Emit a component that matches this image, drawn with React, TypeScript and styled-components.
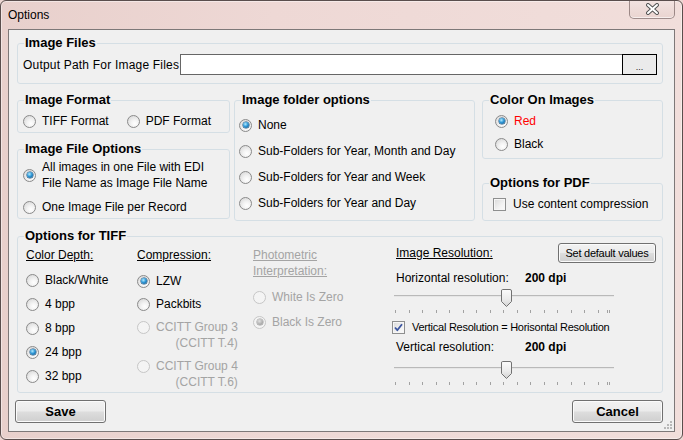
import React from 'react';
import styled, { createGlobalStyle } from 'styled-components';

const GlobalStyle = createGlobalStyle`
 html, body {
  margin: 0;
  padding: 0;
  background: #ecd6d2;
 }
 body {
  font-family: "Liberation Sans", Arial, sans-serif;
  font-size: 12px;
  color: #000;
 }
 * {
  box-sizing: border-box;
 }
`;

interface RadioProps {
 checked?: boolean;
 disabled?: boolean;
 color?: string;
 top?: boolean;
 right?: boolean;
 children: React.ReactNode;
}

function Radio(props: RadioProps) {
 return (
  <Option $disabled={props.disabled} $top={props.top} $color={props.color}>
   <RadioGlyph $checked={props.checked} $disabled={props.disabled} />
   <OptionText $right={props.right}>{props.children}</OptionText>
  </Option>
 );
}

function CheckBox(props: { checked?: boolean; narrow?: boolean; children: React.ReactNode }) {
 return (
  <Option $gap={7}>
   <CheckGlyph>
    {props.checked && (
     <svg width="11" height="11" viewBox="0 0 11 11">
      <path d="M2 5.5 L4.3 8.2 L9 2.2" fill="none" stroke="#3c56a0" strokeWidth="1.8" strokeLinejoin="round" />
     </svg>
    )}
   </CheckGlyph>
   <OptionText $narrow={props.narrow}>{props.children}</OptionText>
  </Option>
 );
}

function Slider(props: { top: number }) {
 const ticks = Array.from({ length: 16 }, (_, i) => 1 + Math.round(i * 13.5)).concat([213, 215]);
 return (
  <SliderBox $top={props.top}>
   <svg width="224" height="27" viewBox="0 0 224 27">
    <defs>
     <linearGradient id="thumbFill" x1="0" y1="0" x2="0" y2="1">
      <stop offset="0" stopColor="#fbfbfb" />
      <stop offset="0.55" stopColor="#ececec" />
      <stop offset="1" stopColor="#d2d2d2" />
     </linearGradient>
    </defs>
    <rect x="0" y="7" width="220" height="1" fill="#b9b9b9" />
    <rect x="0" y="8" width="220" height="1" fill="#e6e6e6" />
    {ticks.map((x) => (
     <rect key={x} x={x} y="22" width="1" height="3" fill="#a2a2a2" />
    ))}
    <path
     d="M108.5 1.5 H116 Q117.5 1.5 117.5 3 V13.5 L112.5 18.5 L107.5 13.5 V3 Q107.5 1.5 108.5 1.5 Z"
     fill="url(#thumbFill)"
     stroke="#727272"
    />
   </svg>
  </SliderBox>
 );
}

function App() {
 return (
  <>
   <GlobalStyle />
   <Window>
    <TitleBar>
     <Title>Options</Title>
     <CloseButton aria-label="Close">
      <svg width="15" height="12" viewBox="0 0 15 12">
       <path d="M3 2 L12 10 M12 2 L3 10" stroke="#545454" strokeWidth="4" strokeLinecap="round" />
       <path d="M3 2 L12 10 M12 2 L3 10" stroke="#ffffff" strokeWidth="2" strokeLinecap="round" />
      </svg>
     </CloseButton>
    </TitleBar>

    <Client>
     <Group>
      <Legend>Image Files</Legend>
      <PathBody>
       <PathLabel>Output Path For Image Files</PathLabel>
       <PathInput readOnly value="" />
       <BrowseButton>...</BrowseButton>
      </PathBody>
     </Group>

     <MiddleRow>
      <Column $gap={8}>
       <Group>
        <Legend>Image Format</Legend>
        <GroupBody $row $gap={18} $pad="5px 5px 3px">
         <Radio>TIFF Format</Radio>
         <Radio>PDF Format</Radio>
        </GroupBody>
       </Group>
       <Group>
        <Legend>Image File Options</Legend>
        <GroupBody $gap={8} $pad="2px 5px 3px">
         <Radio checked>
          All images in one File with EDI
          <br />
          File Name as Image File Name
         </Radio>
         <Radio>One Image File per Record</Radio>
        </GroupBody>
       </Group>
      </Column>

      <Column>
       <Group>
        <Legend>Image folder options</Legend>
        <GroupBody $gap={10} $pad="9px 4px 9px">
         <Radio checked>None</Radio>
         <Radio>Sub-Folders for Year, Month and Day</Radio>
         <Radio>Sub-Folders for Year and Week</Radio>
         <Radio>Sub-Folders for Year and Day</Radio>
        </GroupBody>
       </Group>
      </Column>

      <Column $gap={16} $shift={3}>
       <Group>
        <Legend>Color On Images</Legend>
        <GroupBody $gap={7} $pad="5px 12px 6px">
         <Radio checked color="#ff0000">Red</Radio>
         <Radio>Black</Radio>
        </GroupBody>
       </Group>
       <Group>
        <Legend>Options for PDF</Legend>
        <GroupBody $pad="5px 10px 8px">
         <CheckBox>Use content compression</CheckBox>
        </GroupBody>
       </Group>
      </Column>
     </MiddleRow>

     <TiffGroup>
      <Legend>Options for TIFF</Legend>
      <TiffGrid>
       <TiffColumn $top={3}>
        <Caption>Color Depth:</Caption>
        <OptionList $gap={8} $top={9}>
         <Radio>Black/White</Radio>
         <Radio>4 bpp</Radio>
         <Radio>8 bpp</Radio>
         <Radio checked>24 bpp</Radio>
         <Radio>32 bpp</Radio>
        </OptionList>
       </TiffColumn>

       <TiffColumn $top={3}>
        <Caption>Compression:</Caption>
        <OptionList $gap={7} $top={10}>
         <Radio checked>LZW</Radio>
         <Radio>Packbits</Radio>
         <Radio disabled top right>
          CCITT Group 3
          <br />
          (CCITT T.4)
         </Radio>
         <Radio disabled top right>
          CCITT Group 4
          <br />
          (CCITT T.6)
         </Radio>
        </OptionList>
       </TiffColumn>

       <TiffColumn $top={3}>
        <Caption $disabled>
         Photometric
         <br />
         Interpretation:
        </Caption>
        <OptionList $gap={9} $top={10}>
         <Radio disabled>White Is Zero</Radio>
         <Radio disabled checked>Black Is Zero</Radio>
        </OptionList>
       </TiffColumn>

       <ResolutionColumn>
        <ResolutionHeader>
         <Caption $indent={4}>Image Resolution:</Caption>
         <SmallButton>Set default values</SmallButton>
        </ResolutionHeader>
        <ResolutionRow $top={7}>
         <ResolutionLabel>Horizontal resolution:</ResolutionLabel>
         <ResolutionValue>200 dpi</ResolutionValue>
        </ResolutionRow>
        <Slider top={2} />
        <CheckRow>
         <CheckBox checked narrow>Vertical Resolution = Horisontal Resolution</CheckBox>
        </CheckRow>
        <ResolutionRow $top={5}>
         <ResolutionLabel>Vertical resolution:</ResolutionLabel>
         <ResolutionValue>200 dpi</ResolutionValue>
        </ResolutionRow>
        <Slider top={5} />
       </ResolutionColumn>
      </TiffGrid>
     </TiffGroup>

     <Footer>
      <DialogButton>Save</DialogButton>
      <DialogButton>Cancel</DialogButton>
     </Footer>

     <Grip>
      <svg width="10" height="10" viewBox="0 0 10 10">
       {[
        [7, 1],
        [4, 4],
        [7, 4],
        [1, 7],
        [4, 7],
        [7, 7],
       ].map(([x, y]) => (
        <rect key={`${x}-${y}`} x={x} y={y} width="2" height="2" fill="#b8b8b8" />
       ))}
      </svg>
     </Grip>
    </Client>
   </Window>
  </>
 );
}

export default App;

/* Styled Components */

const Window = styled.div`
 width: 683px;
 height: 440px;
 display: flex;
 flex-direction: column;
 border: 1px solid #5a4e4d;
 border-radius: 6px;
 background: linear-gradient(90deg, #e8d0cc 0%, #eed8d5 40%, #f1dedb 100%);
 box-shadow: inset 0 0 0 1px rgba(255, 255, 255, 0.45);
 overflow: hidden;
`;

const TitleBar = styled.div`
 height: 28px;
 flex: none;
 display: flex;
 align-items: flex-start;
 justify-content: space-between;
 padding: 0 7px 0 7px;
`;

const Title = styled.div`
 padding-top: 6px;
 font-size: 12px;
 line-height: 16px;
 color: #000;
`;

const CloseButton = styled.div`
 width: 46px;
 height: 19px;
 margin-top: -1px;
 display: flex;
 align-items: center;
 justify-content: center;
 border: 1px solid rgba(90, 70, 70, 0.55);
 border-top: none;
 border-radius: 0 0 5px 5px;
 background: linear-gradient(#f3e4e2, #ead4d0);
 box-shadow: inset 0 -1px 0 rgba(255, 255, 255, 0.6);
`;

const Client = styled.div`
 position: relative;
 flex: 1;
 margin: 0 7px 7px 7px;
 border: 1px solid #7d7878;
 background: #f0f0f0;
 display: flex;
 flex-direction: column;
 padding: 5px 11px 8px 8px;
`;

const Group = styled.fieldset`
 margin: 0;
 padding: 0;
 min-width: 0;
 border: 1px solid #d5dfe5;
 border-radius: 3px;
`;

const Legend = styled.legend`
 margin-left: 6px;
 padding: 0 1px;
 font-size: 13px;
 font-weight: bold;
 line-height: 16px;
`;

interface GroupBodyProps {
 $row?: boolean;
 $gap?: number;
 $pad?: string;
}
const GroupBody = styled.div<GroupBodyProps>`
 display: flex;
 flex-direction: ${(p) => (p.$row ? 'row' : 'column')};
 gap: ${(p) => p.$gap ?? 0}px;
 padding: ${(p) => p.$pad ?? '0'};
`;

const PathBody = styled.div`
 display: flex;
 align-items: center;
 padding: 3px 5px 8px 5px;
`;

const PathLabel = styled.div`
 width: 157px;
 flex: none;
 font-size: 12px;
 letter-spacing: 0.2px;
 line-height: 16px;
 white-space: nowrap;
`;

const PathInput = styled.input`
 flex: 1;
 min-width: 0;
 height: 21px;
 margin: 0;
 padding: 0 3px;
 border: 1px solid #666;
 background: #fff;
 font: inherit;
 outline: none;
`;

const BrowseButton = styled.button`
 width: 35px;
 height: 21px;
 flex: none;
 margin: 0 0 0 -1px;
 padding: 4px 0 0 0;
 border: 1px solid #000;
 background: #ebebeb;
 font-family: "Liberation Sans", Arial, sans-serif;
 font-size: 9px;
 line-height: 10px;
 color: #222;
`;

const MiddleRow = styled.div`
 display: grid;
 grid-template-columns: 213px 241px 1fr;
 column-gap: 4px;
 align-items: start;
 margin-top: 8px;
`;

const Column = styled.div<{ $gap?: number; $shift?: number }>`
 display: flex;
 flex-direction: column;
 gap: ${(p) => p.$gap ?? 0}px;
 margin-left: ${(p) => p.$shift ?? 0}px;
`;

const Option = styled.label<{ $disabled?: boolean; $top?: boolean; $color?: string; $gap?: number }>`
 display: flex;
 align-items: ${(p) => (p.$top ? 'flex-start' : 'center')};
 gap: ${(p) => p.$gap ?? 6}px;
 line-height: 16px;
 white-space: nowrap;
 color: ${(p) => (p.$disabled ? '#a4a4a4' : p.$color ?? '#000')};
 & > span:first-child {
  margin-top: ${(p) => (p.$top ? '1.5px' : '0')};
 }
`;

const OptionText = styled.span<{ $right?: boolean; $narrow?: boolean }>`
 text-align: ${(p) => (p.$right ? 'right' : 'left')};
 font-size: ${(p) => (p.$narrow ? '11px' : '12px')};
 letter-spacing: ${(p) => (p.$narrow ? '-0.25px' : 'normal')};
`;

const RadioGlyph = styled.span<{ $checked?: boolean; $disabled?: boolean }>`
 position: relative;
 flex: none;
 width: 13px;
 height: 13px;
 border-radius: 50%;
 border: 1px solid ${(p) => (p.$disabled ? '#c6c6c6' : '#8a8a8a')};
 background: ${(p) =>
  p.$disabled
   ? '#f4f4f4'
   : 'radial-gradient(circle at 62% 68%, #ffffff 0%, #f3f3f3 35%, #d2d2d2 100%)'};
 &::after {
  content: '';
  display: ${(p) => (p.$checked ? 'block' : 'none')};
  position: absolute;
  left: 2.5px;
  top: 2.5px;
  width: 6px;
  height: 6px;
  border-radius: 50%;
  background: ${(p) =>
   p.$disabled
    ? 'radial-gradient(circle at 40% 35%, #e2e2e2 0%, #adadad 60%, #8d8d8d 100%)'
    : 'radial-gradient(circle at 40% 35%, #b4ecff 0%, #2f97d6 45%, #0c4a7c 100%)'};
  box-shadow: 0 0 0 0.5px ${(p) => (p.$disabled ? '#9a9a9a' : '#1b4c74')};
 }
`;

const CheckGlyph = styled.span`
 flex: none;
 width: 13px;
 height: 13px;
 display: flex;
 align-items: center;
 justify-content: center;
 border: 1px solid #8e8f8f;
 background: linear-gradient(135deg, #d9d9d9 0%, #f2f2f2 60%, #fbfbfb 100%);
 box-shadow: inset 0 0 0 1px #f6f6f6;
`;

const TiffGroup = styled(Group)`
 margin-top: 7px;
`;

const TiffGrid = styled.div`
 display: grid;
 grid-template-columns: 111px 116px 139px 1fr;
 align-items: start;
 padding: 0 6px 2px 8px;
`;

const TiffColumn = styled.div<{ $top?: number }>`
 display: flex;
 flex-direction: column;
 padding-top: ${(p) => p.$top ?? 0}px;
`;

const Caption = styled.div<{ $disabled?: boolean; $indent?: number }>`
 line-height: 16px;
 text-decoration: underline;
 white-space: nowrap;
 padding-left: ${(p) => p.$indent ?? 0}px;
 color: ${(p) => (p.$disabled ? '#a4a4a4' : '#000')};
`;

const OptionList = styled.div<{ $gap: number; $top: number }>`
 display: flex;
 flex-direction: column;
 gap: ${(p) => p.$gap}px;
 margin-top: ${(p) => p.$top}px;
`;

const ResolutionColumn = styled.div`
 display: flex;
 flex-direction: column;
 margin-top: -1px;
`;

const ResolutionHeader = styled.div`
 height: 20px;
 display: flex;
 align-items: center;
 justify-content: space-between;
`;

const SmallButton = styled.button`
 width: 98px;
 height: 20px;
 margin: 0;
 padding: 0;
 border: 1px solid #707070;
 border-radius: 3px;
 background: linear-gradient(#f2f2f2 0%, #ebebeb 48%, #dddddd 52%, #cfcfcf 100%);
 box-shadow: inset 0 0 0 1px #fbfbfb;
 font-family: "Liberation Sans", Arial, sans-serif;
 font-size: 11px;
 letter-spacing: -0.25px;
 white-space: nowrap;
 color: #000;
`;

const ResolutionRow = styled.div<{ $top: number }>`
 display: flex;
 align-items: center;
 height: 16px;
 line-height: 16px;
 padding-left: 4px;
 margin-top: ${(p) => p.$top}px;
`;

const ResolutionLabel = styled.div`
 width: 129px;
 white-space: nowrap;
`;

const ResolutionValue = styled.div`
 font-weight: bold;
`;

const SliderBox = styled.div<{ $top: number }>`
 height: 27px;
 padding-left: 2px;
 margin-top: ${(p) => p.$top}px;
 margin-bottom: -3px;
 line-height: 0;
`;

const CheckRow = styled.div`
 margin-top: 8px;
 height: 14px;
 display: flex;
 align-items: center;
`;

const Footer = styled.div`
 display: flex;
 justify-content: space-between;
 margin: 7px 0 0 -2px;
`;

const DialogButton = styled.button`
 width: 91px;
 height: 23px;
 margin: 0;
 padding: 0;
 border: 1px solid #707070;
 border-radius: 3px;
 background: linear-gradient(#f2f2f2 0%, #ebebeb 48%, #dddddd 52%, #cfcfcf 100%);
 box-shadow: inset 0 0 0 1px #fbfbfb;
 font-family: "Liberation Sans", Arial, sans-serif;
 font-size: 13px;
 font-weight: bold;
 color: #000;
`;

const Grip = styled.div`
 position: absolute;
 right: 1px;
 bottom: 1px;
 width: 10px;
 height: 10px;
 line-height: 0;
`;
